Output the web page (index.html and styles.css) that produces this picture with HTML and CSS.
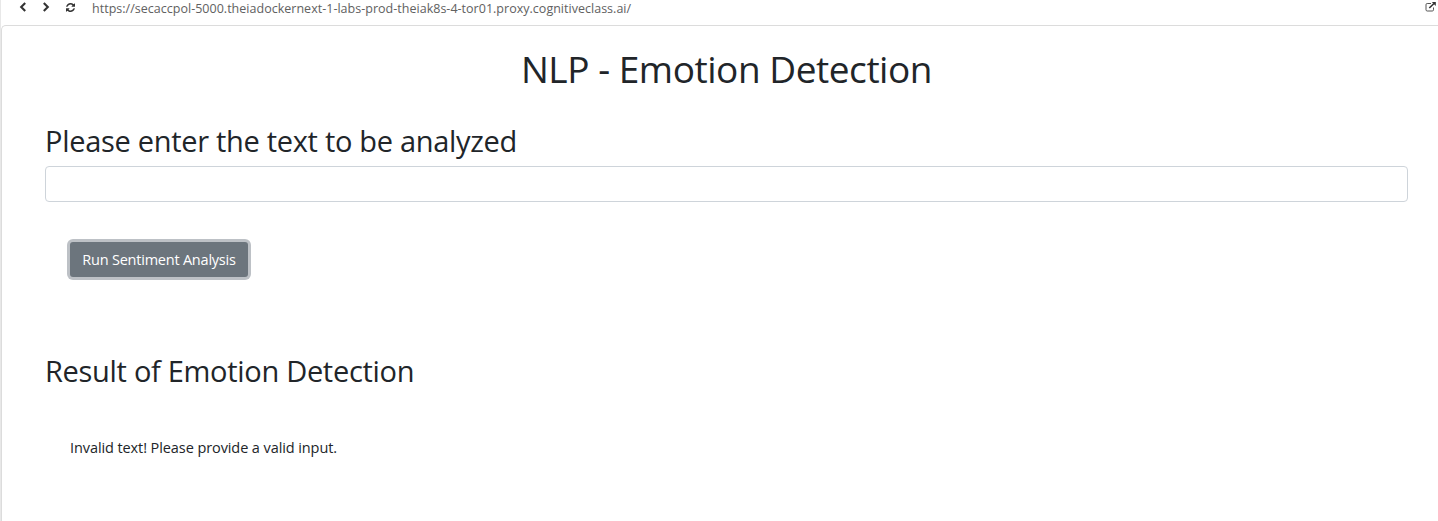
FILE: index.html
```html
<!DOCTYPE html>
<html lang="en">
<head>
<meta charset="utf-8">
<title>NLP - Emotion Detection</title>
<link rel="stylesheet" href="styles.css">
</head>
<body>
<div class="browser">
  <header class="toolbar">
    <svg class="icon back" width="8" height="10" viewBox="0 0 8 10"><path d="M6.2 1 2.2 5l4 4"/></svg>
    <svg class="icon forward" width="8" height="10" viewBox="0 0 8 10"><path d="M1.8 1l4 4-4 4"/></svg>
    <svg class="icon refresh" width="9" height="9" viewBox="0 0 1536 1536"><path d="M1511 928q0 5-1 7-64 268-268 434.500T764 1536q-146 0-282.500-55T238 1324l-129 129q-19 19-45 19t-45-19-19-45V960q0-26 19-45t45-19h448q26 0 45 19t19 45-19 45l-137 137q71 66 161 102t187 36q134 0 250-65t186-179q11-17 53-117 8-23 30-23h192q13 0 22.500 9.500t9.500 22.500zm25-800v448q0 26-19 45t-45 19h-448q-26 0-45-19t-19-45 19-45l138-138Q969 256 768 256q-134 0-250 65T332 500q-11 17-53 117-8 23-30 23H50q-13 0-22.500-9.500T18 608v-7q65-268 270-434.500T768 0q146 0 284 55.500T1297 212l130-129q19-19 45-19t45 19 19 45z"/></svg>
    <span class="url">https://secaccpol-5000.theiadockernext-1-labs-prod-theiak8s-4-tor01.proxy.cognitiveclass.ai/</span>
    <svg class="icon open" width="11" height="10" viewBox="0 0 11 10"><path class="line" d="M6 1.5H2.2Q1 1.500 1 2.700V7.800Q1 9 2.200 9H7.300Q8.500 9 8.500 7.800V5.500"/><path class="line arrow" d="M4.300 6 9 1.500"/><path class="tip" d="M6.800 0H10.800V4Z"/></svg>
  </header>
  <main class="page">
    <h1 class="title">NLP - Emotion Detection</h1>
    <h2 class="heading prompt">Please enter the text to be analyzed</h2>
    <input class="field" type="text" aria-label="Text to analyze">
    <button class="run" type="button">Run Sentiment Analysis</button>
    <h2 class="heading result">Result of Emotion Detection</h2>
    <p class="message">Invalid text! Please provide a valid input.</p>
  </main>
</div>
</body>
</html>
```
FILE: styles.css
```css
* { box-sizing: border-box; }
body {
  margin: 0;
  background: #fff;
  color: #212529;
  font-family: "Open Sans", "Noto Sans", sans-serif;
  overflow: hidden;
}
.browser {
  height: 521px;
  border-left: 1px solid #e8e8e8;
}
.toolbar {
  display: flex;
  align-items: flex-start;
  height: 25px;
  padding: 2px 2px 0 18px;
}
.icon { flex: none; display: block; }
.back, .forward { fill: none; stroke: #333; stroke-width: 2.100; }
.forward { margin-left: 15px; }
.refresh { margin: 1px 0 0 16px; fill: #333; }
.open { margin-left: auto; }
.line { fill: none; stroke: #555; stroke-width: 1; }
.arrow { stroke: #333; stroke-width: 1.600; }
.tip { fill: #333; }
.url {
  margin: -3px 0 0 17px;
  color: #616161;
  font-size: 12.500px;
  letter-spacing: 0.018px;
  line-height: 20px;
  white-space: nowrap;
}
.page {
  display: flex;
  flex-direction: column;
  height: 496px;
  padding: 20px 30px 0 43px;
  border-top: 1px solid #dcdcdc;
  border-left: 1px solid #dcdcdc;
  border-top-left-radius: 5px;
}
.title, .heading, .message { margin: 0; font-weight: 400; white-space: nowrap; }
.title {
  font-size: 37px;
  letter-spacing: -0.450px;
  line-height: 45px;
  text-align: center;
}
.heading {
  align-self: flex-start;
  font-size: 29px;
  letter-spacing: -0.300px;
  line-height: 35px;
}
.prompt { margin-top: 32px; }
.field {
  width: 100%;
  height: 36px;
  margin-top: 8px;
  padding: 6px 12px;
  border: 1px solid #ced4da;
  border-radius: 4px;
  background: #fff;
  font: inherit;
}
.run {
  align-self: flex-start;
  width: 178px;
  height: 35px;
  margin: 40px 0 0 25px;
  padding: 0;
  border: 0;
  border-radius: 3px;
  background: #6c757d;
  box-shadow: 0 0 0 3px #bdc1c6;
  color: #fff;
  font: 14.500px/35px "Open Sans", "Noto Sans", sans-serif;
  letter-spacing: -0.220px;
  white-space: nowrap;
}
.result { margin-top: 76px; }
.message {
  align-self: flex-start;
  margin: 49px 0 0 25px;
  font-size: 14.500px;
  letter-spacing: -0.090px;
  line-height: 22px;
}
```
